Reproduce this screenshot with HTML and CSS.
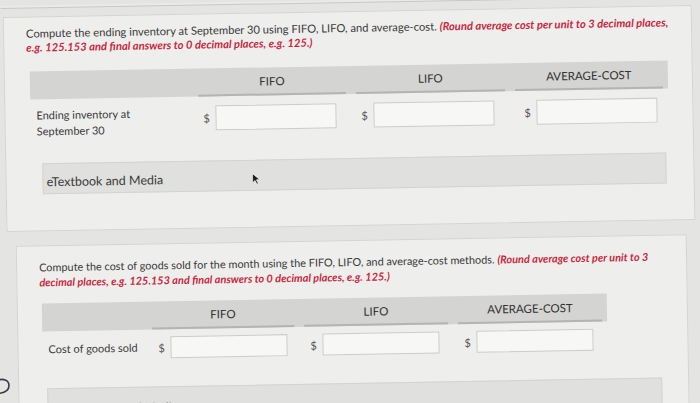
FILE: index.html
```html
<!DOCTYPE html>
<html>
<head>
<meta charset="utf-8">
<link rel="stylesheet" href="styles.css">
</head>
<body>
<div class="page">
  <div class="prev-edge"></div>

  <section class="panel panel-one">
    <p class="prompt p1">Compute the ending inventory at September 30 using FIFO, LIFO, and average-cost. <em class="note">(Round average cost per unit to 3 decimal places, e.g. 125.153 and final answers to 0 decimal places, e.g. 125.)</em></p>

    <div class="table t1">
      <div class="head">
        <div class="hcell blank"></div>
        <div class="hcell">FIFO</div>
        <div class="hcell">LIFO</div>
        <div class="hcell">AVERAGE-COST</div>
      </div>
      <div class="row">
        <div class="label">Ending inventory at<br>September 30</div>
        <div class="cell"><span class="dollar">$</span><span class="input"></span></div>
        <div class="cell"><span class="dollar">$</span><span class="input"></span></div>
        <div class="cell"><span class="dollar">$</span><span class="input"></span></div>
      </div>
    </div>

    <div class="media m1">eTextbook and Media<svg class="cursor" width="9" height="12" viewBox="0 0 9 12"><path d="M1 1 L1 10 L3.4 7.8 L5.2 11.5 L6.6 10.8 L4.8 7.2 L8 7 Z" fill="#1b1b1b" stroke="#fff" stroke-width="0.6"/></svg></div>
  </section>

  <section class="panel panel-two">
    <p class="prompt p2">Compute the cost of goods sold for the month using the FIFO, LIFO, and average-cost methods. <em class="note">(Round average cost per unit to 3 decimal places, e.g. 125.153 and final answers to 0 decimal places, e.g. 125.)</em></p>

    <div class="table t2">
      <div class="head">
        <div class="hcell blank"></div>
        <div class="hcell">FIFO</div>
        <div class="hcell">LIFO</div>
        <div class="hcell">AVERAGE-COST</div>
      </div>
      <div class="row">
        <div class="label">Cost of goods sold</div>
        <div class="cell"><span class="dollar">$</span><span class="input"></span></div>
        <div class="cell"><span class="dollar">$</span><span class="input"></span></div>
        <div class="cell"><span class="dollar">$</span><span class="input"></span></div>
      </div>
    </div>

    <div class="media m2">eTextbook and Media</div>
  </section>
</div>
<svg class="help" width="14" height="20" viewBox="0 0 14 20"><path d="M-3 3.5 C3 1 9 3 9 8.5 C9 14 4 16 -2 16.5" fill="none" stroke="#3a3a46" stroke-width="1.6"/></svg>
</body>
</html>
```

FILE: styles.css
```css
* { box-sizing: border-box; }
html, body {
  margin: 0;
  padding: 0;
  width: 700px;
  height: 403px;
  overflow: hidden;
  background: #e4e4e2;
}
body { position: relative; }
.page {
  width: 700px;
  height: 403px;
  font-family: Lato, "Open Sans", "Liberation Sans", sans-serif;
  color: #3d3d3d;
  transform: rotate(-1deg);
  transform-origin: 350px 201px;
}
.prev-edge {
  height: 3px;
  margin: 0 4px 0 4px;
  border-bottom: 1px solid #c8c8c6;
  background: #eaeae8;
}
.panel {
  background: #eeeeec;
  border: 1px solid #d4d4d1;
}
.prompt {
  margin: 0;
  color: #3a3a3a;
}
.note {
  color: #c8283f;
  font-weight: 700;
  font-style: italic;
}
.table { display: flex; flex-direction: column; }
.head {
  display: grid;
  background: #d4d4d2;
  height: 28px;
}
.hcell {
  font-size: 11.5px;
  color: #333;
  display: flex;
  align-items: center;
  justify-content: center;
  border-bottom: 2px solid #b4b4b2;
  margin: 0 5px;
}
.hcell.blank { border-bottom: none; margin: 0; }
.row {
  display: grid;
  align-items: start;
}
.label {
  font-size: 11px;
  line-height: 16px;
  color: #3a3a3a;
}
.cell {
  display: flex;
  align-items: center;
}
.dollar {
  font-size: 11px;
  color: #555;
  width: 12px;
}
.input {
  display: block;
  background: #f7f7f5;
  border: 1px solid #cbcbc8;
}
.media {
  background: #e0e0de;
  border: 1px solid #d3d3d0;
  color: #3a3a3a;
  display: flex;
  align-items: center;
  position: relative;
}

/* panel 1 */
.panel-one {
  margin: 8px 5px 0 6px;
  height: 215px;
  padding: 9px 0 0 22px;
}
.p1 {
  font-size: 11.2px;
  line-height: 14px;
  width: 656px;
}
.t1 { margin: 17px 0 0 3px; width: 638px; }
.t1 .head, .t1 .row { grid-template-columns: 163px 158px 159px 158px; }
.t1 .row { margin-top: 8px; }
.t1 .label { padding-left: 6px; }
.t1 .cell { padding-top: 1px; }
.t1 .dollar { margin-left: 10px; }
.t1 .cell:nth-child(4) .dollar { margin-left: 14px; }
.t1 .input { width: 121px; height: 25px; }
.m1 {
  margin: 24px 0 0 14px;
  width: 624px;
  height: 31px;
  padding: 6px 0 0 3px;
  font-size: 12.5px;
}
.cursor { position: absolute; left: 208px; top: 12px; }

/* panel 2 */
.panel-two {
  margin: 14px 14px 0 15px;
  height: 200px;
  padding: 13px 0 0 22px;
}
.p2 {
  font-size: 10.9px;
  line-height: 15px;
  width: 620px;
}
.t2 { margin: 14px 0 0 2px; width: 565px; }
.t2 .head, .t2 .row { grid-template-columns: 105px 152px 154px 154px; }
.t2 .row { margin-top: 7px; align-items: center; }
.t2 .label { padding-left: 6px; }
.t2 .dollar { margin-left: 11px; }
.t2 .input { width: 117px; height: 22px; }
.m2 {
  margin: 28px 0 0 6px;
  width: 615px;
  height: 30px;
  padding: 10px 0 0 17px;
  font-size: 12px;
  color: #666;
}
.help { position: absolute; left: 0; top: 377px; }
```
